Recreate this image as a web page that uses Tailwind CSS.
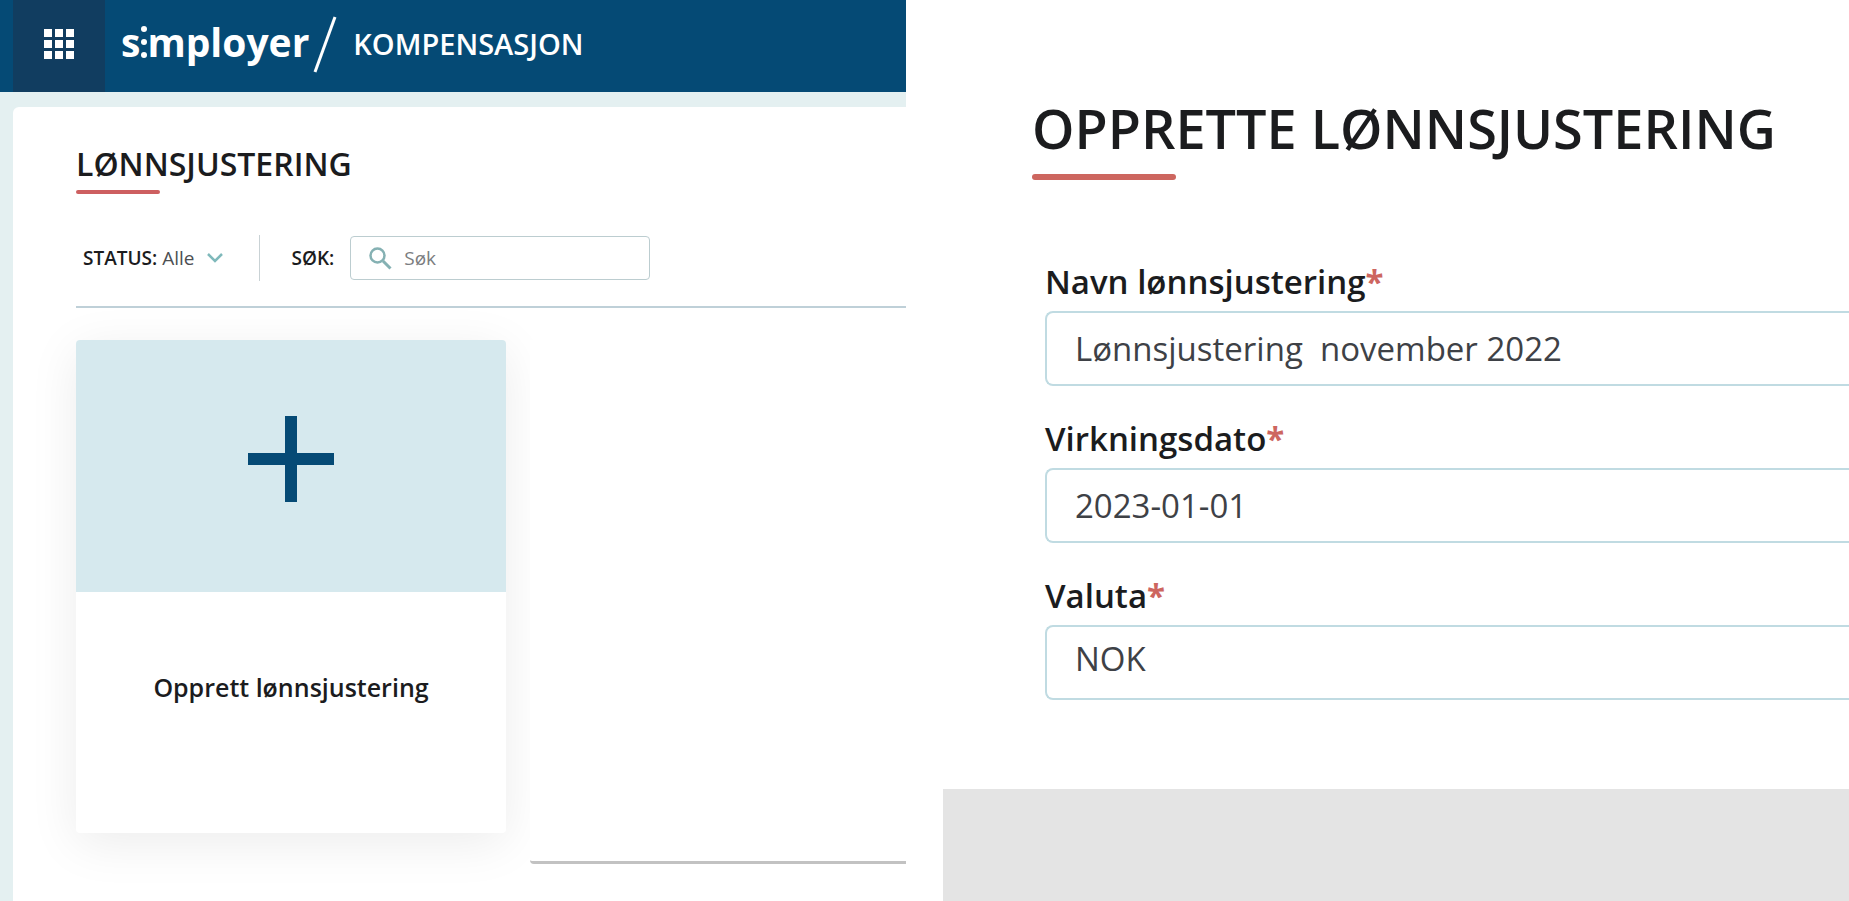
<!DOCTYPE html>
<html lang="no">
<head>
  <meta charset="UTF-8" />
  <meta name="viewport" content="width=device-width, initial-scale=1.0"/>
  <title>Simployer - Kompensasjon</title>
  <script src="https://cdn.jsdelivr.net/npm/@tailwindcss/browser@4"></script>
</head>
<body class="bg-white font-['Open_Sans','Noto_Sans',sans-serif] text-[#1b1c1e]">
  <div class="flex justify-between min-h-screen">

    <!-- Overview -->
    <section class="w-[49%] flex flex-col bg-[#e4f0f1] overflow-hidden">

      <header class="h-[92px] pl-[13px] flex bg-[#054a75] text-white">
        <button aria-label="Apper" class="w-[92px] flex items-center justify-center pb-1 bg-[#113d60]">
          <svg class="w-[30px] h-[30px]" viewBox="0 0 30 30" fill="#fff">
            <path d="M0 0h8v8H0zM11 0h8v8h-8zM22 0h8v8h-8zM0 11h8v8H0zM11 11h8v8h-8zM22 11h8v8h-8zM0 22h8v8H0zM11 22h8v8h-8zM22 22h8v8h-8z"/>
          </svg>
        </button>
        <div class="flex items-center pl-4 pb-1">
          <a href="#" aria-label="Simployer" class="flex items-center text-[39px] leading-[60px] font-bold pb-1">
            <span>s</span>
            <svg class="w-[7px] h-[32px]" viewBox="0 0 7 32" fill="#fff">
              <circle cx="4" cy="3" r="3"/><circle cx="4" cy="16" r="3"/><circle cx="4" cy="29" r="3"/>
            </svg>
            <span>mployer</span>
          </a>
          <svg class="w-[24px] h-[57px] ml-1 mr-4" viewBox="0 0 24 57" fill="none" stroke="#fff" stroke-width="3">
            <path d="M22 1 2 56"/>
          </svg>
          <span class="text-[29px] leading-[40px] font-semibold">KOMPENSASJON</span>
        </div>
      </header>

      <main class="flex-1 mt-[15px] ml-[13px] pl-[63px] pt-[35px] bg-white rounded-tl-md">
        <h1 class="text-[32px] leading-[44px] font-semibold">LØNNSJUSTERING</h1>
        <div class="w-[84px] h-1 mt-1 rounded-full bg-[#cd5f60]"></div>

        <div class="h-[114px] flex items-center pt-4 pl-[7px] border-b-2 border-[#bfd0d8]">
          <button class="flex items-center text-[19px] leading-[26px]">
            <span class="font-semibold">STATUS:</span>
            <span class="ml-[5px] text-[#4c4f52]">Alle</span>
            <svg class="w-[16px] h-[10px] ml-3" viewBox="0 0 16 10" fill="none" stroke="#7fb9bb" stroke-width="2.5">
              <path d="M1 1l7 7 7-7"/>
            </svg>
          </button>
          <div class="w-px h-[46px] ml-9 mr-8 bg-[#c9d2d5]"></div>
          <label for="search" class="text-[19px] leading-[26px] font-semibold">SØK:</label>
          <div class="w-[300px] h-[44px] ml-4 px-[18px] flex items-center border border-[#bccdd0] rounded">
            <svg class="w-[23px] h-[23px] shrink-0" viewBox="0 0 23 23" fill="none" stroke="#85b1b3" stroke-width="3">
              <circle cx="8.5" cy="8.5" r="7" stroke-width="2.5"/><path d="M14 14l7.5 7.5"/>
            </svg>
            <input id="search" type="text" placeholder="Søk" class="w-full ml-3 text-[19px] leading-[26px] placeholder:text-[#7b7d80] outline-none" />
          </div>
        </div>

        <div class="flex gap-6 pt-8">
          <a href="#" class="w-[430px] h-[493px] shrink-0 flex flex-col bg-white rounded shadow-[0_10px_50px_rgba(0,0,0,0.08)]">
            <div class="h-[252px] flex items-center justify-center pb-[14px] bg-[#d6e9ee] rounded-t">
              <svg class="w-[86px] h-[86px]" viewBox="0 0 86 86" fill="#054a75">
                <path d="M37 0h12v37h37v12H49v37H37V49H0V37h37z"/>
              </svg>
            </div>
            <div class="flex-1 flex items-center justify-center pb-[52px] text-[25px] leading-[34px] font-semibold">Opprett lønnsjustering</div>
          </a>
          <div class="relative flex-1 h-[524px] bg-white border-b-3 border-[#c2c2c2] rounded-bl"></div>
        </div>
      </main>
    </section>

    <!-- New adjustment -->
    <section class="w-[49%] flex flex-col overflow-hidden">
      <form class="flex-1 flex flex-col pl-[89px] pt-[89px]">
        <h2 class="text-[54px] leading-[78px] font-semibold whitespace-nowrap">OPPRETTE LØNNSJUSTERING</h2>
        <div class="w-[144px] h-[6px] mt-[7px] rounded-full bg-[#cd665f]"></div>

        <div class="flex flex-col gap-[31px] pt-[80px] pl-[13px] pb-[85px] text-[33px]">
          <div>
            <label for="name" class="block h-[51px] leading-[44px] font-semibold">Navn lønnsjustering<span class="font-bold text-[#cd665f]">*</span></label>
            <input id="name" type="text" value="Lønnsjustering  november 2022" class="block w-full h-[75px] pl-7 border-2 border-r-0 border-[#c0dbe2] rounded-l-lg text-[#3e4146]" />
          </div>
          <div>
            <label for="date" class="block h-[51px] leading-[44px] font-semibold">Virkningsdato<span class="font-bold text-[#cd665f]">*</span></label>
            <input id="date" type="text" value="2023-01-01" class="block w-full h-[75px] pl-7 border-2 border-r-0 border-[#c0dbe2] rounded-l-lg text-[#3e4146]" />
          </div>
          <div>
            <label for="currency" class="block h-[51px] leading-[44px] font-semibold">Valuta<span class="font-bold text-[#cd665f]">*</span></label>
            <select id="currency" class="block w-full h-[75px] pl-7 pb-2 border-2 border-r-0 border-[#c0dbe2] rounded-l-lg appearance-none text-[#3e4146]">
              <option>NOK</option>
            </select>
          </div>
        </div>
      </form>
      <footer class="h-[112px] bg-[#e4e4e4]"></footer>
    </section>

  </div>
</body>
</html>
